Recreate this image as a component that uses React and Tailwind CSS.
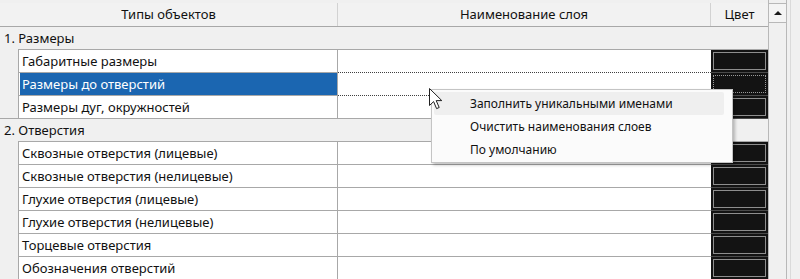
import React from 'react';

const groups = [
  {
    title: '1. Размеры',
    items: ['Габаритные размеры', 'Размеры до отверстий', 'Размеры дуг, окружностей'],
  },
  {
    title: '2. Отверстия',
    items: [
      'Сквозные отверстия (лицевые)',
      'Сквозные отверстия (нелицевые)',
      'Глухие отверстия (лицевые)',
      'Глухие отверстия (нелицевые)',
      'Торцевые отверстия',
      'Обозначения отверстий',
    ],
  },
];

const GroupRow = ({ title, first }) => (
  <div className="relative h-[23px] flex flex-col">
    {!first && <div className="absolute left-0 top-[-1px] w-[18px] h-px bg-[#a8a8a8]" />}
    <div className="flex-1 flex items-center pl-[4px] text-[13px] text-[#111]">{title}</div>
    <div className="h-px ml-[18px] w-[750px] bg-[#a8a8a8]" />
  </div>
);

const ItemRow = ({ label, selected }) => (
  <div className="flex h-[23px]">
    <div className="w-[18px] shrink-0" />
    <div
      className={
        selected
          ? 'w-[320px] shrink-0 flex items-center border-l border-r border-b border-[#a8a8a8] bg-white pl-px text-[13px]'
          : 'w-[320px] shrink-0 flex items-center border-l border-r border-b border-[#a8a8a8] bg-white pl-[3px] text-[13px] text-[#111]'
      }
    >
      {selected ? (
        <div className="h-full w-full flex items-center bg-[#1b66b1] pl-[2px] text-white">{label}</div>
      ) : (
        label
      )}
    </div>
    <div
      className={
        selected
          ? 'w-[373px] shrink-0 bg-white border-t border-b border-dotted border-[#404040] -mt-px h-[24px]'
          : 'w-[373px] shrink-0 bg-white border-b border-[#a8a8a8]'
      }
    />
    <div className="w-[57px] shrink-0 bg-[#131313] border-b border-[#4a4a4a] p-[2px]">
      <div
        className={
          selected
            ? 'h-full w-full border border-dotted border-[#9a9a9a]'
            : 'h-full w-full border border-[#8e8e8e]'
        }
      />
    </div>
  </div>
);

const Cursor = () => (
  <svg
    className="absolute left-[428px] top-[87px]"
    width="17"
    height="24"
    viewBox="0 0 17 24"
  >
    <path
      d="M1.5 1.5 L1.5 18.5 L5.6 14.6 L8.6 21.6 L11.2 20.5 L8.2 13.6 L13.8 13.6 Z"
      fill="#ffffff"
      stroke="#202020"
      strokeWidth="1"
      strokeLinejoin="round"
    />
  </svg>
);

const ContextMenu = () => (
  <div className="absolute left-[431px] top-[89px] w-[302px] h-[74px] bg-[#fbfbfb] border border-[#c4c4c4] shadow-[2px_2px_3px_rgba(0,0,0,0.25)] pt-[2px] px-[2px] text-[12px] text-[#111]">
    <div className="h-[23px] flex items-center pl-[36px] bg-[#efefef] rounded-[2px] mr-[6px]">
      Заполнить уникальными именами
    </div>
    <div className="h-[24px] flex items-center pl-[36px]">Очистить наименования слоев</div>
    <div className="h-[22px] flex items-center pl-[36px]">По умолчанию</div>
  </div>
);

export default function App() {
  return (
    <div className="relative w-[800px] h-[279px] overflow-hidden bg-[#f0f0f0] font-['Noto_Sans',sans-serif] leading-none">
      <div className="flex">
        <div className="w-[768px] shrink-0">
          <div className="h-[3px]" />
          <div className="flex h-[24px] border-b border-[#a8a8a8] bg-[#f2f2f2] text-[13px] text-[#111]">
            <div className="w-[338px] shrink-0 flex items-center justify-center border-r border-[#d2d2d2]">
              Типы объектов
            </div>
            <div className="w-[373px] shrink-0 flex items-center justify-center border-r border-[#d2d2d2]">
              Наименование слоя
            </div>
            <div className="flex-1 flex items-center justify-center">Цвет</div>
          </div>
          {groups.map((g, gi) => (
            <React.Fragment key={g.title}>
              <GroupRow title={g.title} first={gi === 0} />
              {g.items.map((item) => (
                <ItemRow key={item} label={item} selected={item === 'Размеры до отверстий'} />
              ))}
            </React.Fragment>
          ))}
        </div>
        <div className="w-[19px] shrink-0 flex flex-col border-l border-r border-[#b8b8b8] bg-[#f0f0f0] h-[279px]">
          <div className="h-[3px]" />
          <div className="h-[20px] border-t border-b border-[#b8b8b8] bg-[#f4f4f4] flex items-center justify-center">
            <div className="w-0 h-0 border-l-[4px] border-r-[4px] border-b-[4px] border-l-transparent border-r-transparent border-b-[#1a1a1a]" />
          </div>
          <div className="flex-1" />
        </div>
        <div className="flex-1 flex">
          <div className="w-[3px]" />
          <div className="w-px h-[279px] bg-[#dadada]" />
        </div>
      </div>
      <ContextMenu />
      <Cursor />
    </div>
  );
}
